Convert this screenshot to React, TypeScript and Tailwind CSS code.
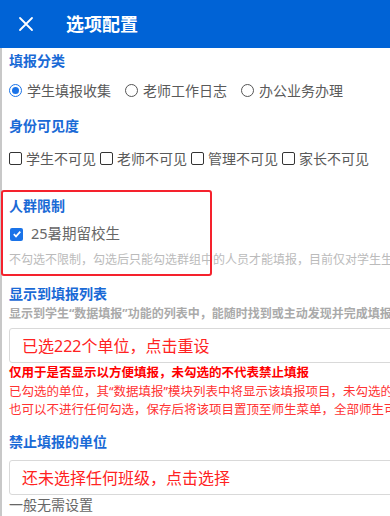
import React from 'react';

const font = { fontFamily: '"Noto Sans", "Noto Sans CJK SC", sans-serif' };

function Radio({ checked, label }: { checked?: boolean; label: string }) {
  return (
    <span className="flex items-center gap-[5px]">
      <span
        className={`flex h-[13px] w-[13px] items-center justify-center rounded-full border ${
          checked ? 'border-[#1a73e8]' : 'border-[#555]'
        }`}
      >
        {checked && <span className="h-[7px] w-[7px] rounded-full bg-[#1a73e8]" />}
      </span>
      <span>{label}</span>
    </span>
  );
}

function Box({ label }: { label: string }) {
  return (
    <span className="flex items-center gap-[4px]">
      <span className="h-[13px] w-[13px] rounded-[2px] border border-[#333]" />
      <span>{label}</span>
    </span>
  );
}

export default function App() {
  return (
    <div className="relative h-[516px] w-[390px] overflow-hidden bg-white" style={font}>
      {/* Header */}
      <header className="flex h-[48px] items-center bg-[#0063d6] text-white">
        <svg width="16" height="16" viewBox="0 0 16 16" className="ml-[18px]">
          <path d="M2 2 L14 14 M14 2 L2 14" stroke="white" strokeWidth="1.8" strokeLinecap="round" />
        </svg>
        <h1 className="ml-[32px] text-[18px] font-bold leading-none">选项配置</h1>
      </header>

      <main className="h-[468px] whitespace-nowrap border-l-2 border-[#c8c8c8] pl-[7px] text-[14px] text-[#5a5a5a]">
        <h2 className="pt-[4px] text-[14px] font-bold leading-[18px] text-[#1a6ad6]">填报分类</h2>
        <div className="mt-[10px] flex h-[20px] items-center gap-[14px]">
          <Radio checked label="学生填报收集" />
          <Radio label="老师工作日志" />
          <Radio label="办公业务办理" />
        </div>

        <h2 className="mt-[17px] text-[14px] font-bold leading-[18px] text-[#1a6ad6]">身份可见度</h2>
        <div className="mt-[13px] flex h-[20px] items-center gap-[4px]">
          <Box label="学生不可见" />
          <Box label="老师不可见" />
          <Box label="管理不可见" />
          <Box label="家长不可见" />
        </div>

        <h2 className="mt-[29px] text-[14px] font-bold leading-[18px] text-[#1a6ad6]">人群限制</h2>
        <div className="mt-[9px] flex h-[20px] items-center gap-[8px] pl-[1px]">
          <span className="flex h-[13px] w-[13px] items-center justify-center rounded-[2px] bg-[#1a73e8]">
            <svg width="10" height="10" viewBox="0 0 10 10">
              <path d="M1.8 5.2 L4 7.4 L8.3 2.6" fill="none" stroke="white" strokeWidth="1.7" />
            </svg>
          </span>
          <span className="text-[14.5px] text-[#666]">25暑期留校生</span>
        </div>
        <p className="mt-[7px] text-[12px] leading-[18px] text-[#bbb]">
          不勾选不限制，勾选后只能勾选群组中的人员才能填报，目前仅对学生生效
        </p>

        <h2 className="mt-[16px] text-[14px] font-bold leading-[18px] text-[#1a6ad6]">显示到填报列表</h2>
        <p className="mt-[2px] text-[12px] font-bold leading-[18px] text-[#aaa]">
          显示到学生“数据填报”功能的列表中，能随时找到或主动发现并完成填报
        </p>
        <div className="mt-[5px] flex h-[35px] w-[420px] items-center rounded-[3px] border border-[#d9d9d9] pl-[12px] text-[16px] text-[#f22]">
          已选222个单位，点击重设
        </div>
        <p className="mt-[1px] text-[12.5px] font-bold leading-[18px] text-[#f00]">
          仅用于是否显示以方便填报，未勾选的不代表禁止填报
        </p>
        <p className="mt-[1px] text-[12.5px] leading-[18px] text-[#f33]">
          已勾选的单位，其“数据填报”模块列表中将显示该填报项目，未勾选的将不显示
        </p>
        <p className="text-[12.5px] leading-[18px] text-[#f33]">
          也可以不进行任何勾选，保存后将该项目置顶至师生菜单，全部师生可随时填报
        </p>

        <h2 className="mt-[14px] text-[14px] font-bold leading-[18px] text-[#1a6ad6]">禁止填报的单位</h2>
        <div className="mt-[9px] flex h-[35px] w-[420px] items-center rounded-[3px] border border-[#d9d9d9] pl-[12px] text-[16px] text-[#f22]">
          还未选择任何班级，点击选择
        </div>
        <p className="mt-[1px] text-[14px] leading-[18px] text-[#666]">一般无需设置</p>
      </main>

      {/* annotation frame */}
      <div className="pointer-events-none absolute left-[1px] top-[190px] h-[86px] w-[211px] rounded-[3px] border-2 border-[#f5222d]" />
    </div>
  );
}
